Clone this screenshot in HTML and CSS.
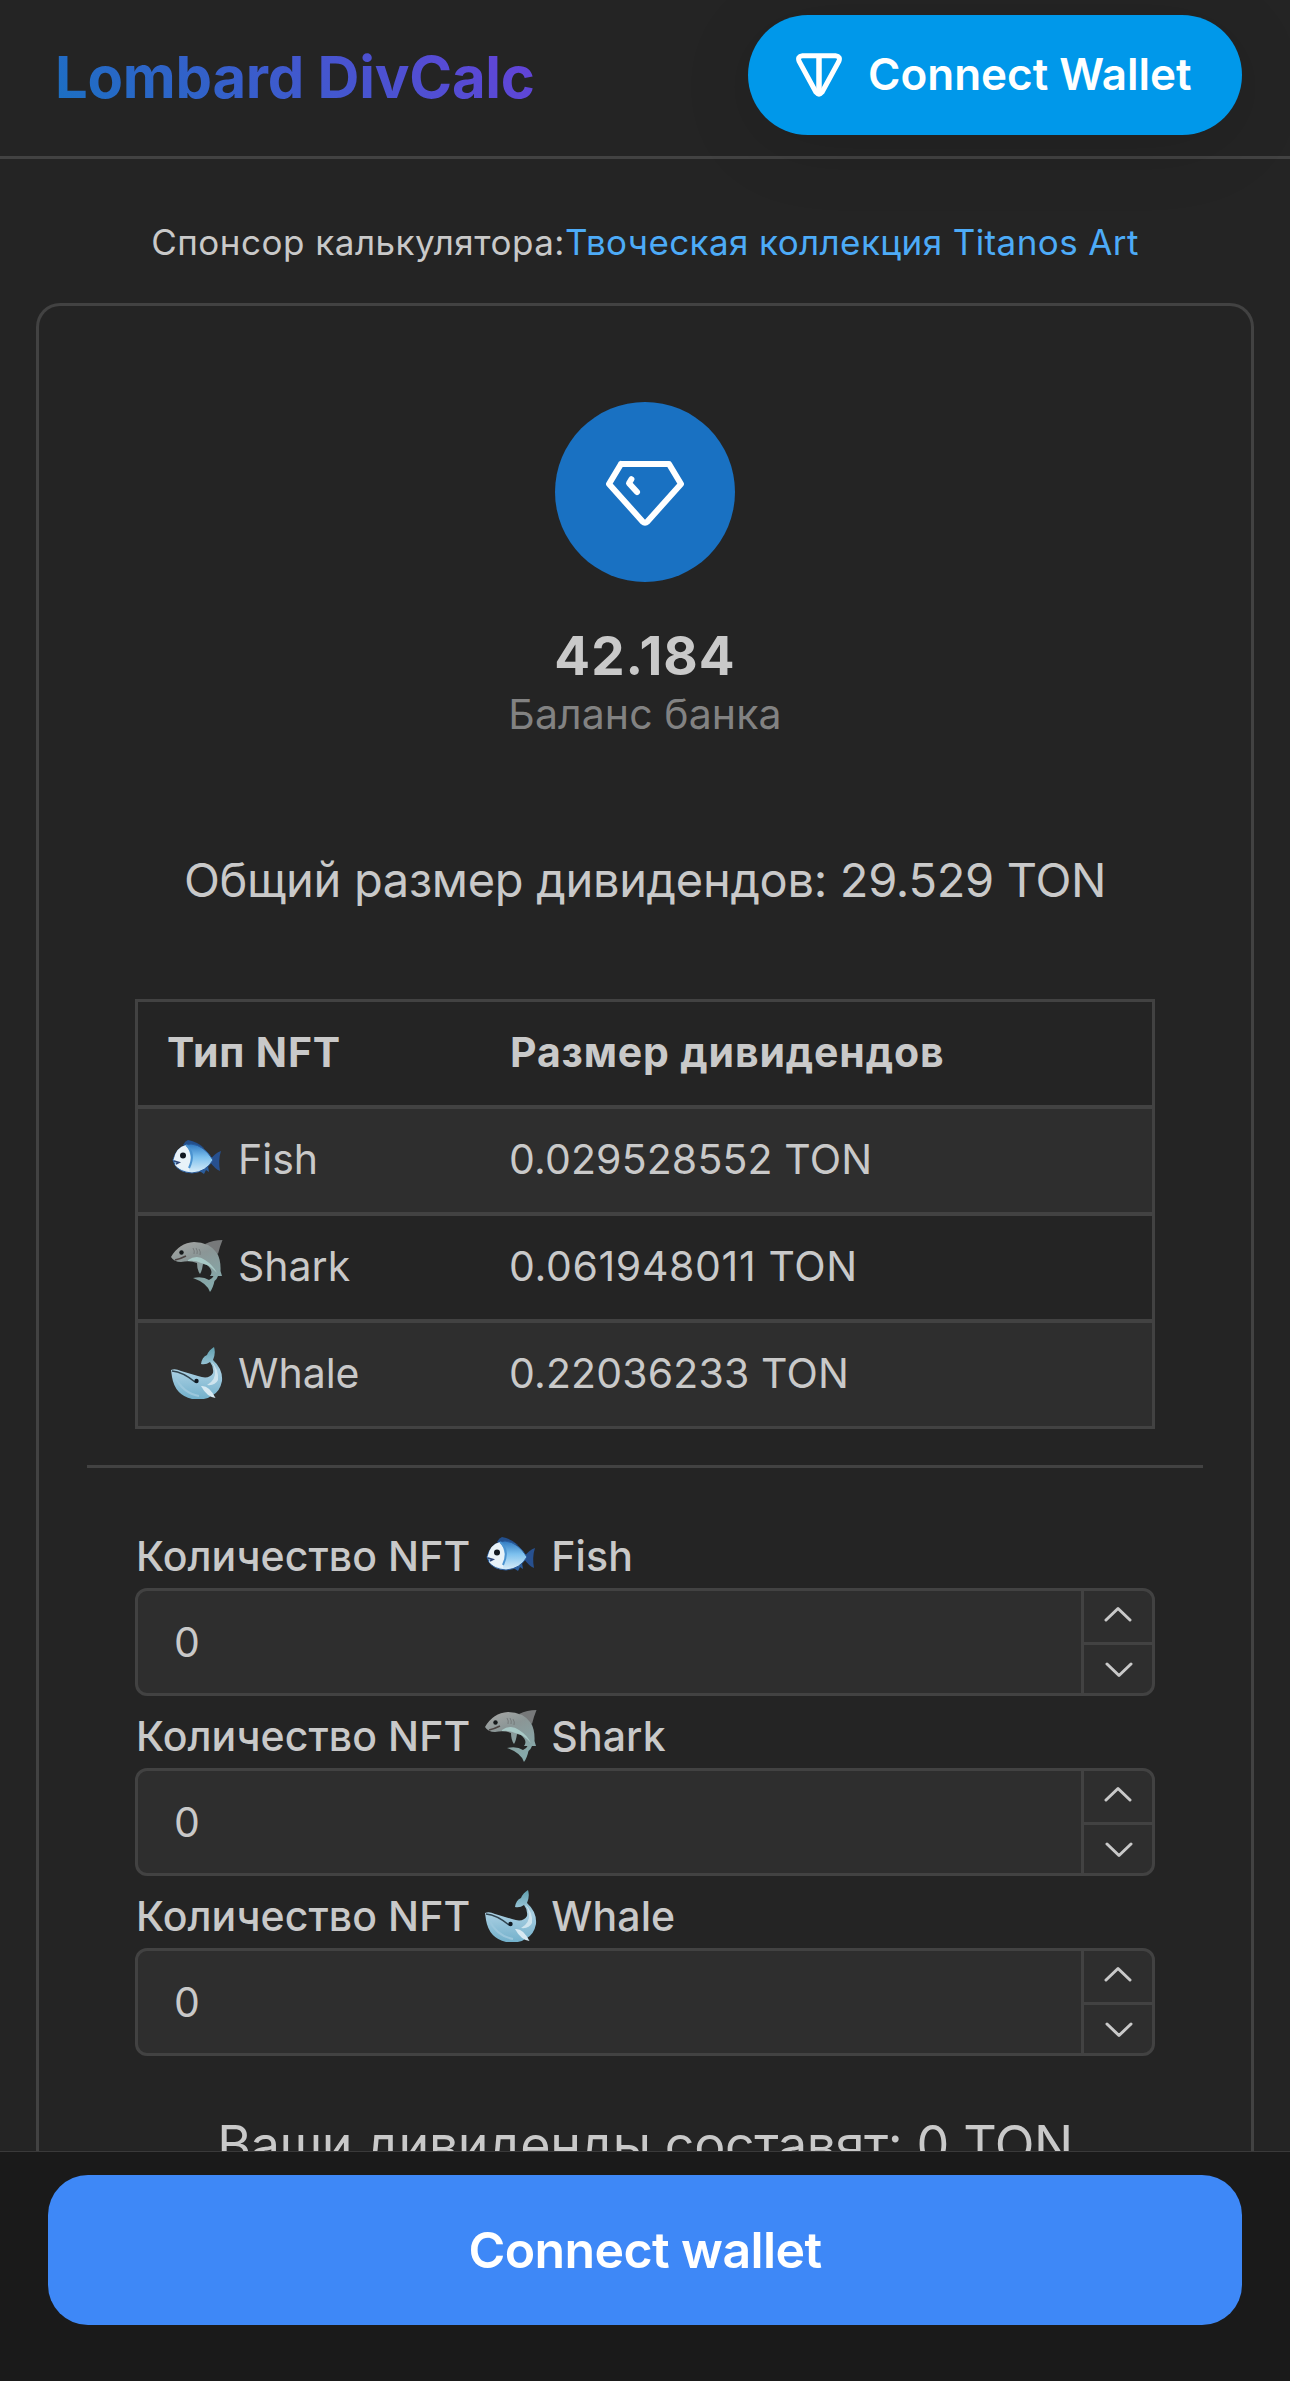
FILE: index.html
```
<!DOCTYPE html>
<html lang="ru">
<head>
    <meta charset="UTF-8">
    <meta name="viewport" content="width=device-width, initial-scale=1.0">
    <title>Lombard DivCalc</title>
    <link rel="stylesheet" href="styles.css">
</head>
<body>
    <!-- shared icons -->
    <svg class="sprite" width="0" height="0">
        <defs>
            <linearGradient id="fish-body" x1="0" y1="0" x2="0" y2="1">
                <stop offset="0" stop-color="#2f78c0"/>
                <stop offset="0.45" stop-color="#7cc0ee"/>
                <stop offset="1" stop-color="#dceef8"/>
            </linearGradient>
            <linearGradient id="shark-body" x1="0" y1="0" x2="0.4" y2="1">
                <stop offset="0" stop-color="#aaa9a7"/>
                <stop offset="0.4" stop-color="#8b9696"/>
                <stop offset="1" stop-color="#86a9aa"/>
            </linearGradient>
            <linearGradient id="whale-body" x1="0" y1="0" x2="0" y2="1">
                <stop offset="0" stop-color="#5f9fae"/>
                <stop offset="0.45" stop-color="#a9cfe2"/>
                <stop offset="1" stop-color="#72b0cb"/>
            </linearGradient>
        </defs>
        <symbol id="fish" viewBox="0 0 52 52">
            <path d="M12 12 Q14 8 17 7 Q27 9 33 15 Z" fill="#234f8c"/>
            <path d="M39 27 Q44 20 50 18 Q47 27 49 38 Q44 36 39 29 Z" fill="#27508f"/>
            <path d="M27 37 L33 41 L35 37 L38 39 L37 33 Z" fill="#2b5d9c"/>
            <path d="M2 27 Q6 12 20 11 Q33 12 42 27 Q35 39 21 40 Q8 39 4 32 Z" fill="url(#fish-body)" stroke="#285a9b" stroke-width="1"/>
            <path d="M2.500 27 Q5 14 15 12 Q23 23 18 38 Q8 37 4 32 L7 29 Z" fill="#e8f2f8"/>
            <path d="M15 12 Q25 20 18 35" fill="none" stroke="#4b93d0" stroke-width="2"/>
            <circle cx="12" cy="22.500" r="3" fill="#101820"/>
            <path d="M3 28 L8 29.500 L5 31" fill="none" stroke="#30487a" stroke-width="1.500"/>
        </symbol>
        <symbol id="shark" viewBox="0 0 52 52">
            <path d="M34 4 Q42 0 51.500 0 Q49 6 47 14 Z" fill="#77797a"/>
            <path d="M0 17 Q8 3 23 2 Q38 2 46 13 Q50 20 49.500 31 L51 36 L47 36 Q46 39 43.500 41 Q42 48 39 52 Q36 43 22 38 Q32 36 38 40 Q42 38 42.500 36 L39 36 Q43 31 36 25 L32 24 Q31 31 29 34 Q26 30 26 23 Q19 20 10 22 Q3 22 0 17 Z" fill="url(#shark-body)"/>
            <path d="M17 20 Q26 14 34 20 Q42 25 46 33 Q38 24 30 23 Q24 20 17 21 Z" fill="#a8c9c6"/>
            <path d="M4 20 Q9 19 15 16" fill="none" stroke="#4c4342" stroke-width="1.600"/>
            <path d="M22 8 Q24 11 23 14 M25 8 Q27 11 26 14 M28 9 Q30 12 29 15" fill="none" stroke="#6f7273" stroke-width="0.800"/>
            <circle cx="10.500" cy="12.500" r="2.200" fill="#15181a"/>
        </symbol>
        <symbol id="whale" viewBox="0 0 52 52">
            <path d="M0 23 Q4 21 10 24 L27 29 Q38 33 42 26 Q43 20 39 15 Q35 18 30 17 Q31 10 36 8 Q38 3 43 0 Q45 6 42 13 Q52 22 51 34 Q49 44 42 48 Q34 54 21 52 Q4 48 1 30 Z" fill="url(#whale-body)"/>
            <path d="M40 14 Q48 22 47 33 Q44 39 36 38 Q45 33 44 24 Q43 18 40 14 Z" fill="#cfe4ee"/>
            <path d="M1 24 Q12 25 24 35" fill="none" stroke="#30444f" stroke-width="1.400"/>
            <path d="M4 30 Q12 46 28 49" fill="none" stroke="#9bc7dc" stroke-width="2"/>
            <path d="M30 39 Q38 38 44.500 51 Q36 50 30 39 Z" fill="#d7e9f2"/>
            <circle cx="25.500" cy="34" r="2.200" fill="#101a22"/>
        </symbol>
    </svg>

    <header class="header">
        <h1 class="title">Lombard DivCalc</h1>
        <button class="ton-button">
            <svg width="46" height="44" viewBox="0 0 46 44" fill="none" stroke="#fff" stroke-width="5">
                <path d="M6.500 2.700 H39.500 Q45 3.200 42.800 8.500 L26 39.300 Q23 43 20 39.300 L3.200 8.500 Q1 3.200 6.500 2.700 Z"/>
                <path d="M23 3 V40" stroke-width="5.500"/>
            </svg>
            <span>Connect Wallet</span>
        </button>
    </header>

    <p class="sponsor"><span>Спонсор калькулятора:</span><a class="sponsor-link">Твоческая коллекция Titanos Art</a></p>

    <main class="card">
        <div class="balance">
            <div class="balance-icon">
                <svg width="96" height="96" viewBox="0 0 24 24" fill="none" stroke="#fff" stroke-width="1.500" stroke-linecap="round" stroke-linejoin="round">
                    <path d="M6 5h12l3 5l-8.500 9.500a.7 .7 0 0 1 -1 0l-8.500 -9.500l3 -5"/>
                    <path d="M10 12l-2 -2.200l.6 -1"/>
                </svg>
            </div>
            <div class="balance-value">42.184</div>
            <div class="balance-label">Баланс банка</div>
        </div>

        <p class="total">Общий размер дивидендов: 29.529 TON</p>

        <table class="dividends">
            <tr><th>Тип NFT</th><th>Размер дивидендов</th></tr>
            <tr><td><svg class="emoji"><use href="#fish"/></svg>Fish</td><td class="amount">0.029528552 TON</td></tr>
            <tr><td><svg class="emoji"><use href="#shark"/></svg>Shark</td><td class="amount wide">0.061948011 TON</td></tr>
            <tr><td><svg class="emoji"><use href="#whale"/></svg>Whale</td><td class="amount">0.22036233 TON</td></tr>
        </table>

        <hr class="divider">

        <form class="counts">
            <label for="fish-count">Количество NFT<svg class="emoji"><use href="#fish"/></svg>Fish</label>
            <div class="number">
                <input id="fish-count" type="text" value="0">
                <div class="controls">
                    <button type="button"><svg viewBox="0 0 28 16"><path d="M2 14 L14 2.500 L26 14"/></svg></button>
                    <button type="button"><svg viewBox="0 0 28 16"><path d="M2 2 L14 13.500 L26 2"/></svg></button>
                </div>
            </div>
            <label for="shark-count">Количество NFT<svg class="emoji"><use href="#shark"/></svg>Shark</label>
            <div class="number">
                <input id="shark-count" type="text" value="0">
                <div class="controls">
                    <button type="button"><svg viewBox="0 0 28 16"><path d="M2 14 L14 2.500 L26 14"/></svg></button>
                    <button type="button"><svg viewBox="0 0 28 16"><path d="M2 2 L14 13.500 L26 2"/></svg></button>
                </div>
            </div>
            <label for="whale-count">Количество NFT<svg class="emoji"><use href="#whale"/></svg>Whale</label>
            <div class="number">
                <input id="whale-count" type="text" value="0">
                <div class="controls">
                    <button type="button"><svg viewBox="0 0 28 16"><path d="M2 14 L14 2.500 L26 14"/></svg></button>
                    <button type="button"><svg viewBox="0 0 28 16"><path d="M2 2 L14 13.500 L26 2"/></svg></button>
                </div>
            </div>
        </form>

        <p class="result">Ваши дивиденды составят: 0 TON</p>
    </main>

    <footer class="main-button-bar">
        <button class="main-button">Connect wallet</button>
    </footer>
</body>
</html>
```
FILE: styles.css
```
* {
    box-sizing: border-box;
}
body {
    margin: 0;
    height: 2381px;
    overflow: hidden;
    background-color: #242424;
    color: #c9c9c9;
    font-family: Inter, "Liberation Sans", sans-serif;
    font-size: 41px;
}
button {
    font-family: inherit;
    border: none;
    color: white;
    cursor: pointer;
}
p {
    margin: 0;
}
.sprite {
    position: absolute;
}

/* header */
.header {
    display: flex;
    align-items: center;
    justify-content: space-between;
    height: 159px;
    padding: 0 48px 0 55px;
    border-bottom: 3px solid #424242;
}
.title {
    margin: 0 0 3px;
    font-size: 58px;
    font-weight: 700;
    line-height: 80px;
    letter-spacing: -0.25px;
    color: transparent;
    background: linear-gradient(45deg, #1971c2, #6741d9);
    background-clip: text;
    -webkit-background-clip: text;
}
.ton-button {
    display: flex;
    align-items: center;
    gap: 26px;
    width: 494px;
    height: 120px;
    margin-bottom: 6px;
    padding: 0 48px;
    border-radius: 60px;
    background-color: #0098ea;
    box-shadow: 0 12px 72px rgba(0, 0, 0, 0.12);
    font-size: 44px;
    font-weight: 600;
    white-space: nowrap;
}
.ton-button span {
    margin-bottom: 2px;
}

/* sponsor line */
.sponsor {
    margin: 56px 0 34px;
    text-align: center;
    font-size: 35px;
    line-height: 54px;
    letter-spacing: 0.5px;
}
.sponsor-link {
    color: #4dabf7;
    letter-spacing: 0.4px;
}

/* card */
.card {
    height: 2078px;
    margin: 0 36px;
    padding: 96px 48px 0;
    border: 3px solid #424242;
    border-bottom: none;
    border-radius: 24px 24px 0 0;
}
.balance {
    display: flex;
    flex-direction: column;
    align-items: center;
}
.balance-icon {
    display: flex;
    align-items: center;
    justify-content: center;
    width: 180px;
    height: 180px;
    border-radius: 50%;
    background-color: #1971c2;
}
.balance-value {
    margin-top: 44px;
    font-size: 53px;
    font-weight: 700;
    line-height: 60px;
    letter-spacing: 1px;
}
.balance-label {
    line-height: 56px;
    letter-spacing: 0.1px;
    color: #828282;
}
.total {
    margin-top: 102px;
    text-align: center;
    font-size: 47px;
    line-height: 72px;
    letter-spacing: -0.31px;
}

/* dividends table */
.dividends {
    width: 1020px;
    margin: 83px auto 0;
    border: 3px solid #424242;
    border-spacing: 0;
    table-layout: fixed;
}
.dividends th,
.dividends td {
    height: 107px;
    padding: 0 31px 3px;
    border-bottom: 4px solid #424242;
    text-align: left;
    line-height: 60px;
}
.dividends th {
    font-weight: 700;
    letter-spacing: 0.85px;
}
.dividends th:first-child {
    width: 341px;
}
.dividends th:first-child,
.dividends td:first-child {
    padding-left: 29px;
}
.dividends tr:nth-child(even) {
    background-color: #2e2e2e;
}
.dividends tr:last-child td {
    height: 103px;
    border-bottom: none;
}
.dividends .amount {
    padding-left: 30px;
    letter-spacing: 0.15px;
}
.dividends .amount.wide {
    letter-spacing: 0.65px;
}
.emoji {
    width: 52px;
    height: 52px;
    flex: none;
}
.dividends .emoji {
    float: left;
    margin: 4px 15px 4px 4px;
}
.divider {
    height: 3px;
    margin: 36px 0 0;
    border: none;
    background-color: #424242;
}

/* number inputs */
.counts {
    margin: 55px 48px 0;
}
.counts label {
    display: flex;
    align-items: center;
    height: 65px;
    margin-top: 7px;
    padding-left: 1px;
    font-weight: 500;
    letter-spacing: 0.1px;
}
.counts .emoji {
    margin: 0 14px 0 15px;
}
.number {
    display: flex;
    height: 108px;
    border: 3px solid #424242;
    border-radius: 12px;
    background-color: #2e2e2e;
    overflow: hidden;
}
.number input {
    flex: 1;
    padding: 0 36px;
    border: none;
    background: none;
    color: #c9c9c9;
    font-family: inherit;
    font-size: 41px;
}
.controls {
    display: flex;
    flex-direction: column;
    width: 71px;
    border-left: 3px solid #424242;
}
.controls button {
    height: 51px;
    padding: 0 1px 6px 0;
    background: none;
    line-height: 0;
}
.controls button + button {
    padding: 2px 0 0 1px;
    border-top: 3px solid #424242;
}
.controls svg {
    width: 28px;
    height: 16px;
    fill: none;
    stroke: #c9c9c9;
    stroke-width: 3;
    stroke-linecap: round;
    stroke-linejoin: round;
}
.result {
    margin-top: 53px;
    text-align: center;
    font-size: 52px;
    line-height: 72px;
    letter-spacing: -0.43px;
}

/* bottom bar over the page */
.main-button-bar {
    position: fixed;
    left: 0;
    right: 0;
    bottom: 0;
    height: 230px;
    padding: 23px 48px 0;
    border-top: 1px solid #3a3a3a;
    background-color: #1a1a1a;
}
.main-button {
    width: 100%;
    height: 150px;
    border-radius: 40px;
    background-color: #3e88f7;
    font-size: 50px;
    font-weight: 600;
    letter-spacing: -0.6px;
}
```
